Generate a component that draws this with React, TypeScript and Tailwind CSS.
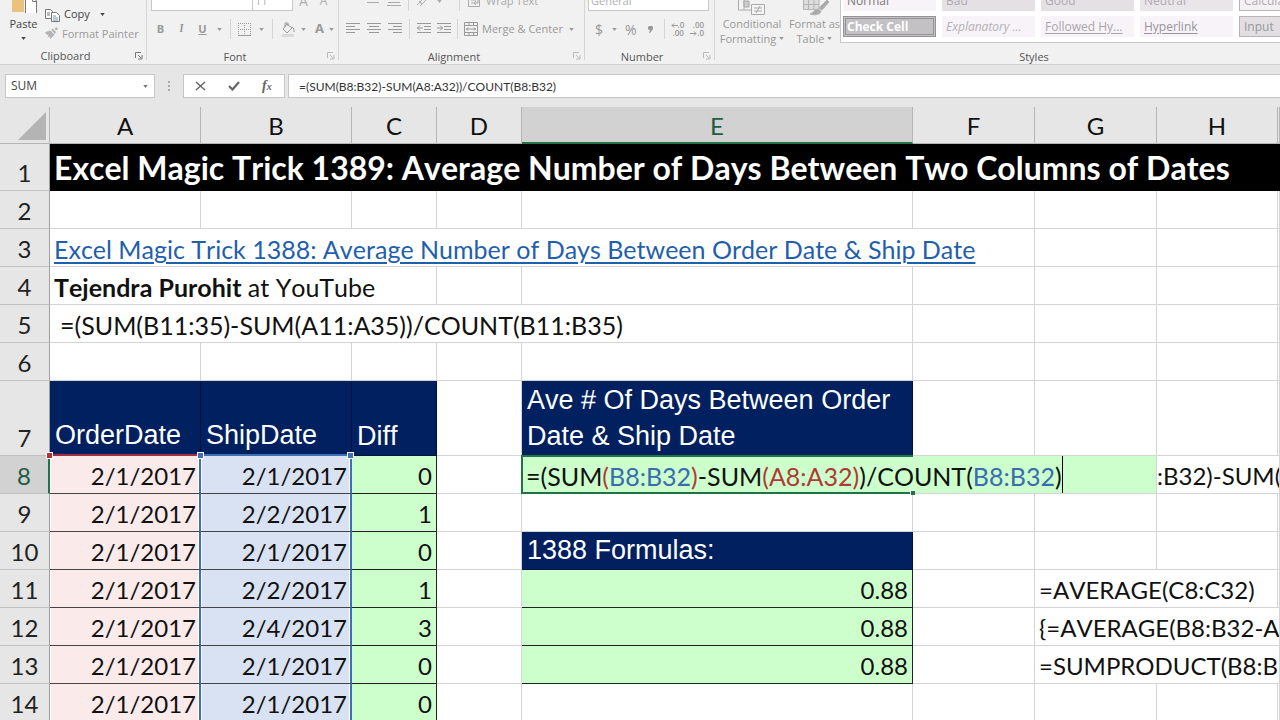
import { ReactNode, useState } from 'react';
import clsx from 'clsx';

const cell = 'h-[38px] border-r border-b border-[#d4d4d4] px-1 pb-[2px] align-bottom whitespace-nowrap';
const textCell = 'h-[38px] border-r border-b border-[#d4d4d4] px-1 pb-[2px] align-bottom text-[25px] whitespace-nowrap';
const navy = 'h-[38px] border-r border-b border-[#00103f] bg-[#00205f] px-[5px] pb-px text-left align-bottom font-["Liberation_Sans",sans-serif] text-[27px] leading-9 font-normal text-white';
const green = 'h-[38px] border-r border-b border-[#222] bg-[#ccffcc] px-1 pb-[2px] text-right align-bottom';

const columns = ['A', 'B', 'C', 'D', 'E', 'F', 'G', 'H', ''];

const orders = [
    { order: '2/1/2017', ship: '2/1/2017', diff: 0 },
    { order: '2/1/2017', ship: '2/2/2017', diff: 1 },
    { order: '2/1/2017', ship: '2/1/2017', diff: 0 },
    { order: '2/1/2017', ship: '2/2/2017', diff: 1 },
    { order: '2/1/2017', ship: '2/4/2017', diff: 3 },
    { order: '2/1/2017', ship: '2/1/2017', diff: 0 },
    { order: '2/1/2017', ship: '2/1/2017', diff: 0 },
];

const Caret = ({ className }: { className?: string }) => (
    <svg viewBox="0 0 6 4" className={clsx('h-[3px] shrink-0', className ?? 'w-[5px]')} fill="currentColor">
        <path d="M0 0h6L3 4z" />
    </svg>
);

const Launcher = ({ dark }: { dark?: boolean }) => (
    <button aria-label="More options" className={clsx('absolute right-1 bottom-1', dark ? 'text-[#777]' : 'text-[#b9b9b9]')}>
        <svg viewBox="0 0 8 8" className="size-2" fill="none" stroke="currentColor">
            <path d="M.5 6V.5H6M3 3l3 3M7 3v4H3" />
        </svg>
    </button>
);

const Divider = () => <div className="h-5 w-px bg-[#d5d5d5]" />;

const Group = ({ label, width, children, dark }: { label: string; width: string; children: ReactNode; dark?: boolean }) => (
    <section aria-label={label} className={clsx('relative flex h-16 flex-col justify-end overflow-hidden', width)}>
        {children}
        <div className="h-4 pr-4 text-center leading-[15px] text-[#555]">{label}</div>
        <Launcher dark={dark} />
        <div className="absolute right-0 bottom-1 h-16 w-px bg-[#d5d5d5]" />
    </section>
);

const AlignIcon = ({ d }: { d: string }) => (
    <svg viewBox="0 0 14 12" className="h-3 w-[14px]" fill="none" stroke="currentColor">
        <path d={d} />
    </svg>
);

const Clipboard = () => (
    <Group label="Clipboard" width="w-[147px]" dark>
        <div className="flex h-[48px] pl-[10px]">
            <button className="flex w-[27px] flex-col items-center justify-start text-[#444]">
                <svg viewBox="0 0 27 16" className="-mt-[3px] h-4 w-[27px] shrink-0">
                    <path d="M2 0h12v15H2z" fill="#eac27d" />
                    <path d="M15.500 1h8l3 3v12.500h-11z" fill="#fff" stroke="#777" />
                    <path d="M22.500 0v4.500h4" fill="none" stroke="#777" />
                </svg>
                <span className="leading-[22px]">Paste</span>
                <Caret className="mt-[2px] w-[5px]" />
            </button>
            <div className="flex flex-col items-start pl-2">
                <button className="flex h-[26px] items-end gap-1 pb-1 leading-4 text-[#444]">
                    <svg viewBox="0 0 15 13" className="h-[13px] w-[15px]" fill="#fff" stroke="#777">
                        <path d="M.5.500h5l2 2v7h-7zM2 4h3M2 6h3" />
                        <path d="M6.500 3.500h5l3 3v6h-8z" />
                        <path d="M8 7h3M8 9h5M8 11h5" stroke="#6e95c0" />
                    </svg>
                    Copy
                    <Caret className="mb-[6px] ml-[6px] w-[5px]" />
                </button>
                <button className="flex h-[22px] items-start gap-1 leading-4 text-[#9a9a9a]">
                    <svg viewBox="0 0 15 14" className="h-[14px] w-[13px]" fill="#b4b4b4">
                        <path d="M0 6l6-2 5 5-5 5-1-3-2 1 1-3-2 0zM7 3l2-1 4 4-2 2zM11 2l2-2 2 2-2 2z" />
                    </svg>
                    Format Painter
                </button>
            </div>
        </div>
    </Group>
);

const FontGroup = () => (
    <Group label="Font" width="w-[192px]">
        <div className="flex h-5 shrink-0 items-stretch pl-[4px] text-[#b0b0b0]">
            <select aria-label="Font name" className="w-[102px] appearance-none border border-[#c8c8c8] bg-white">
                <option></option>
            </select>
            <select aria-label="Font size" className="w-[40px] appearance-none border border-l-0 border-[#c8c8c8] bg-white px-[2px] leading-3">
                <option>11</option>
            </select>
            <button aria-label="Increase font size" className="ml-[6px] text-[14px] leading-5">A</button>
            <button aria-label="Decrease font size" className="ml-3 text-[12px] leading-5">A</button>
        </div>
        <div className="mt-2 mb-[10px] flex h-5 items-center pl-[9px] text-[11px] text-[#999]">
            <button className="w-[9px] font-bold">B</button>
            <button className="ml-3 w-[9px] font-serif font-bold italic">I</button>
            <button className="ml-3 w-[9px] font-bold underline">U</button>
            <Caret className="mr-2 ml-[10px] w-[5px]" />
            <Divider />
            <button aria-label="Borders" className="ml-[7px]">
                <svg viewBox="0 0 13 13" className="size-[13px]" fill="none" stroke="currentColor">
                    <path d="M.5 0v12M6.500 0v12M12.500 0v12M0 .5h13M0 6.500h13" strokeDasharray="1 1" />
                    <path d="M0 12.500h13" />
                </svg>
            </button>
            <Caret className="mr-2 ml-2 w-[5px]" />
            <Divider />
            <button aria-label="Fill color" className="ml-2">
                <svg viewBox="0 0 15 15" className="size-[15px]" fill="none" stroke="currentColor">
                    <path d="M6 2l5 4-5 5-4-4zM4 5V1h3v3M11 5c2 1 2 3 2 5" />
                    <path d="M1 12h12v3H1z" fill="#d9d9d9" stroke="none" />
                </svg>
            </button>
            <Caret className="ml-[5px] w-[5px]" />
            <button aria-label="Font color" className="ml-[9px] text-[13px] font-bold">A</button>
            <Caret className="ml-[5px] w-[5px]" />
        </div>
    </Group>
);

const Alignment = () => (
    <Group label="Alignment" width="w-[246px]">
        <div className="flex h-5 shrink-0 items-center text-[#aaa]">
            <button aria-label="Middle align" className="ml-[27px]">
                <AlignIcon d="M1 7.500h12" />
            </button>
            <button aria-label="Bottom align" className="ml-[7px]">
                <AlignIcon d="M0 4.500h14M1 7.500h12M0 10.500h14" />
            </button>
            <div className="ml-[7px] h-5 w-px bg-[#d5d5d5]" />
            <button aria-label="Orientation" className="ml-[7px]">
                <AlignIcon d="M1 10l8-8M4 11l8-8M3 6l3 3" />
            </button>
            <Caret className="ml-[7px] w-[5px]" />
            <div className="ml-[17px] h-5 w-px bg-[#d5d5d5]" />
            <button className="ml-2 flex items-center gap-[6px] leading-5">
                <svg viewBox="0 0 12 12" className="size-3" fill="none" stroke="currentColor">
                    <path d="M.5 0v11.500h11V0M3 2h6M3 5h5M3 8h3M10 5v3H7M8 6L6 8l2 2" />
                </svg>
                Wrap Text
            </button>
        </div>
        <div className="mt-2 mb-[10px] flex h-5 items-center pl-[7px] text-[#999]">
            <button aria-label="Align left">
                <AlignIcon d="M0 .5h14M0 3.500h9M0 6.500h14M0 9.500h9" />
            </button>
            <button aria-label="Center" className="ml-[7px]">
                <AlignIcon d="M0 .5h14M2 3.500h10M0 6.500h14M2 9.500h10" />
            </button>
            <button aria-label="Align right" className="ml-[7px]">
                <AlignIcon d="M0 .5h14M5 3.500h9M0 6.500h14M5 9.500h9" />
            </button>
            <div className="mr-[7px] ml-[7px]">
                <Divider />
            </div>
            <button aria-label="Decrease indent">
                <AlignIcon d="M0 .5h14M7 3.500h7M7 6.500h7M0 9.500h14M0 5h6M3 2.500L.5 5 3 7.500" />
            </button>
            <button aria-label="Increase indent" className="ml-[6px]">
                <AlignIcon d="M0 .5h14M7 3.500h7M7 6.500h7M0 9.500h14M0 5h6M3 2.500L5.500 5 3 7.500" />
            </button>
            <div className="mr-[6px] ml-[6px]">
                <Divider />
            </div>
            <button className="flex items-center gap-1">
                <svg viewBox="0 0 14 14" className="size-[14px]" fill="none" stroke="currentColor">
                    <path d="M.5.500h13v13H.5zM0 3.500h14M0 10.500h14M5 .5v3M5 10v3M9.500 .5v3M9.500 10v3M2 7h10M4 5.500L2.500 7 4 8.500M10 5.500L11.500 7 10 8.500" />
                </svg>
                Merge & Center
            </button>
            <Caret className="ml-[6px] w-[5px]" />
        </div>
    </Group>
);

const NumberGroup = () => (
    <Group label="Number" width="w-[130px]">
        <div className="flex h-5 shrink-0 pl-[3px]">
            <select aria-label="Number format" className="w-[121px] appearance-none border border-[#c8c8c8] bg-white px-[2px] leading-4 text-[#b0b0b0]">
                <option>General</option>
            </select>
        </div>
        <div className="mt-2 mb-[10px] flex h-5 items-center pl-[10px] text-[14px] text-[#999]">
            <button>$</button>
            <Caret className="ml-[9px] w-[5px]" />
            <button className="ml-2">%</button>
            <button aria-label="Comma style" className="ml-[11px]">
                <svg viewBox="0 0 5 7" className="h-[7px] w-[5px]" fill="currentColor">
                    <path d="M1 0h3l1 1v2L2 7H1l1-3H1L0 3V1z" />
                </svg>
            </button>
            <div className="mr-[6px] ml-[11px]">
                <Divider />
            </div>
            <button aria-label="Increase decimal" className="flex flex-col text-left text-[8px] leading-[8px] font-semibold">
                <span className="flex items-center">
                    <svg viewBox="0 0 7 5" className="h-[5px] w-[7px]" fill="none" stroke="currentColor">
                        <path d="M7 2.500H1M3 .5l-2 2 2 2" />
                    </svg>
                    .0
                </span>
                <span className="pl-[2px]">.00</span>
            </button>
            <button aria-label="Decrease decimal" className="ml-[6px] flex flex-col items-end text-[8px] leading-[8px] font-semibold">
                <span>.00</span>
                <span className="flex items-center">
                    <svg viewBox="0 0 7 5" className="h-[5px] w-[7px]" fill="none" stroke="currentColor">
                        <path d="M0 2.500h6M4 .5l2 2-2 2" />
                    </svg>
                    .0
                </span>
            </button>
        </div>
    </Group>
);

const styleCell = 'flex h-[21px] items-center overflow-hidden px-1 text-left text-[12px] leading-4 whitespace-nowrap';

const Styles = () => (
    <section aria-label="Styles" className="flex h-16 min-w-0 flex-1 overflow-hidden text-[#999]">
        <button className="flex w-[74px] flex-col items-center justify-end pb-[18px] leading-[15px]">
            <svg viewBox="0 0 30 16" className="h-4 w-[30px] shrink-0" fill="#f4f4f4" stroke="#aaa">
                <path d="M1.500 0v10H15M7 0v10" />
                <path d="M7 1h5v6H7z" fill="#ccc" />
                <path d="M14.500 4.500h13v10h-13zM17 8h8M17 11h8M23 6l-4 7" />
            </svg>
            <span>Conditional</span>
            <span className="flex items-center gap-[3px]">
                Formatting
                <Caret />
            </span>
        </button>
        <button className="flex w-[51px] flex-col items-center justify-end pb-[18px] leading-[15px] whitespace-nowrap">
            <svg viewBox="0 0 30 16" className="h-4 w-[30px] shrink-0" fill="#ddd" stroke="#b4b4b4">
                <path d="M3.500 0v9.500H19V0" />
                <path d="M3 4.500h16M8.500 0v9M14 0v9" />
                <path d="M27 0l2 2-7 8-3-2zM18 9c-4 0-4 4-8 5 5 2 11 0 11-3z" fill="#aaa" />
            </svg>
            <span>Format as</span>
            <span className="flex items-center gap-[3px]">
                Table
                <Caret />
            </span>
        </button>
        <div className="flex min-w-0 flex-1 flex-col justify-end">
            <div className="grid shrink-0 grid-cols-[93px_93px_93px_93px_93px] gap-x-[6px] gap-y-[5px] border-b border-l border-[#c6c6c6] bg-white pb-[5px] pl-[2px]">
                <button className={clsx(styleCell, 'bg-[#f7f3f8] text-[#777]')}>Normal</button>
                <button className={clsx(styleCell, 'bg-[#e5e0e4] text-[#b0abb0]')}>Bad</button>
                <button className={clsx(styleCell, 'bg-[#e5e0e4] text-[#b0abb0]')}>Good</button>
                <button className={clsx(styleCell, 'bg-[#e9e5e9] text-[#b0abb0]')}>Neutral</button>
                <button className={clsx(styleCell, 'border border-[#b5b5b5] bg-[#f4f1f4] text-[#b0abb0]')}>Calculation</button>
                <button className={clsx(styleCell, 'border-[3px] border-double border-[#949494] bg-[#c3c1c3] px-[1px] font-bold text-white')}>Check Cell</button>
                <button className={clsx(styleCell, 'bg-[#f7f3f8] text-[#b5b0b5] italic')}>Explanatory ...</button>
                <button className={clsx(styleCell, 'bg-[#f7f3f8] text-[#aaa5aa] underline underline-offset-2')}>Followed Hy...</button>
                <button className={clsx(styleCell, 'bg-[#f7f3f8] text-[#999499] underline underline-offset-2')}>Hyperlink</button>
                <button className={clsx(styleCell, 'border border-[#b5b5b5] bg-[#e2dee2] text-[#999]')}>Input</button>
            </div>
            <div className="mt-[6px] h-4 pr-[52px] text-center leading-[15px] text-[#555]">Styles</div>
        </div>
    </section>
);

const FormulaBar = () => {
    const [name, setName] = useState('SUM');
    const [formula, setFormula] = useState('=(SUM(B8:B32)-SUM(A8:A32))/COUNT(B8:B32)');

    return (
        <div className="flex h-[42px] items-start bg-[#e6e6e6] pt-[9px] pl-[5px]">
            <div className="flex h-6 w-[150px] items-center border border-[#c6c6c6] bg-white pr-[5px] text-[#777]">
                <input aria-label="Name box" value={name} onChange={e => setName(e.target.value)} className="min-w-0 flex-1 pl-[5px] text-[12px] text-[#444] outline-none" />
                <button aria-label="Show names">
                    <Caret className="w-[7px]" />
                </button>
            </div>
            <svg viewBox="0 0 2 10" className="mt-[7px] ml-[13px] h-[10px] w-[2px]" fill="#aaa">
                <path d="M0 0h2v2H0zM0 4h2v2H0zM0 8h2v2H0z" />
            </svg>
            <div className="ml-[13px] flex h-6 w-[102px] items-center border border-[#c6c6c6] bg-white pl-[11px] text-[#666]">
                <button aria-label="Cancel">
                    <svg viewBox="0 0 11 10" className="h-[10px] w-[11px]" fill="none" stroke="currentColor" strokeWidth="1.5">
                        <path d="M1 1l9 8M10 1L1 9" />
                    </svg>
                </button>
                <button aria-label="Enter" className="ml-[22px]">
                    <svg viewBox="0 0 12 10" className="h-[10px] w-3" fill="none" stroke="currentColor" strokeWidth="2.200">
                        <path d="M1 5l3.500 3.500L11 1" />
                    </svg>
                </button>
                <button aria-label="Insert function" className="ml-[22px] font-['Liberation_Serif',serif] text-[14px] leading-4 font-bold italic">
                    f<span className="text-[10px]">x</span>
                </button>
            </div>
            <input
                aria-label="Formula"
                value={formula}
                onChange={e => setFormula(e.target.value)}
                className="ml-[3px] h-6 min-w-0 flex-1 border border-r-0 border-[#c6c6c6] bg-white pl-[10px] font-[Lato,sans-serif] text-[12px] text-[#333] outline-none [font-kerning:none]"
            />
        </div>
    );
};

const RowNumber = ({ n, active }: { n: number; active?: boolean }) => (
    <th
        scope="row"
        className={clsx(
            'border-b pb-[2px] text-center align-bottom font-normal',
            active ? 'border-r-2 border-r-[#217346] border-b-[#c0c0c0] bg-[#d2d2d2] text-[#215c41]' : 'border-r border-r-[#9f9f9f] border-b-[#c0c0c0] bg-[#e6e6e6] text-[#222]',
        )}>
        {n}
    </th>
);

const Blank = ({ count }: { count: number }) => (
    <>
        {Array.from({ length: count }, (_, i) => (
            <td key={i} className={cell} />
        ))}
    </>
);

const Handle = ({ className }: { className: string }) => <span className={clsx('absolute z-10 size-[7px] border border-white', className)} />;

const OrderCells = ({ index }: { index: number }) => {
    const row = orders[index];
    const first = index === 0;
    return (
        <>
            <td className="relative h-[38px] border-r-2 border-b border-r-[#3f6fb5] border-b-[#444] bg-[#faeaea] pr-[3px] pb-[2px] text-right align-bottom shadow-[inset_1px_0_0_#fff,inset_-1px_0_0_#fff]">
                {row.order}
                {first && <Handle className="-top-[4px] -left-[4px] bg-[#b03040]" />}
            </td>
            <td className="relative h-[38px] border-r-2 border-b border-r-[#3f6fb5] border-b-[#444] bg-[#d8e2f3] pr-[3px] pb-[2px] text-right align-bottom shadow-[inset_1px_0_0_#fff,inset_-1px_0_0_#fff]">
                {row.ship}
                {first && <Handle className="-top-[4px] -left-[4px] bg-[#3f6fb5]" />}
                {first && <Handle className="-top-[4px] -right-[4px] bg-[#3f6fb5]" />}
            </td>
            <td className={green}>{row.diff}</td>
        </>
    );
};

const CellEditor = () => (
    <div role="textbox" aria-label="Cell E8" className="absolute top-0 left-0 flex h-[37px] w-[634px] items-end bg-[#ccffcc] pb-[2px] pl-1 text-left text-[25px]">
        <span>=(SUM</span>
        <span className="text-[#b03a36]">(</span>
        <span className="text-[#3a6cb0]">B8:B32</span>
        <span className="text-[#b03a36]">)</span>
        <span>-SUM</span>
        <span className="text-[#b03a36]">(A8:A32)</span>
        <span>)/COUNT(</span>
        <span className="text-[#3a6cb0]">B8:B32</span>
        <span>)</span>
        <span className="-mb-[2px] h-[37px] w-px bg-black" />
        <span className="absolute -top-px -left-px h-[39px] w-[392px] border-2 border-r-0 border-[#217346]" />
        <span className="absolute -bottom-[2px] left-[388px] h-[5px] w-[5px] border-t border-l border-white bg-[#217346]" />
    </div>
);

const Sheet = () => (
    <table className="w-full min-w-[1280px] table-fixed border-separate border-spacing-0 bg-white font-[Lato,sans-serif] text-[24px] leading-[30px] text-[#111] [font-kerning:none]">
        <colgroup>
            <col className="w-[50px]" />
            <col className="w-[151px]" />
            <col className="w-[151px]" />
            <col className="w-[85px]" />
            <col className="w-[85px]" />
            <col className="w-[391px]" />
            <col className="w-[122px]" />
            <col className="w-[122px]" />
            <col className="w-[121px]" />
            <col />
        </colgroup>
        <thead>
            <tr>
                <th className="h-[37px] border-r border-b border-[#b5b5b5] bg-[#e6e6e6] p-0 align-bottom">
                    <svg viewBox="0 0 28 28" className="mb-[3px] ml-[18px] size-7" fill="#b4b4b4">
                        <path d="M28 0v28H0z" />
                    </svg>
                </th>
                {columns.map((c, i) => (
                    <th
                        key={i}
                        scope="col"
                        className={clsx(
                            'h-[37px] border-r p-0 align-bottom font-normal',
                            c === 'E' ? 'border-b-2 border-r-[#b5b5b5] border-b-[#217346] bg-[#d2d2d2] pb-px text-[#215c41]' : 'border-b border-[#b5b5b5] bg-[#e6e6e6] pb-[2px]',
                        )}>
                        {c}
                    </th>
                ))}
            </tr>
        </thead>
        <tbody>
            <tr>
                <RowNumber n={1} />
                <td colSpan={9} className="h-[47px] overflow-hidden bg-black px-1 pb-1 align-bottom text-[32px] leading-[38px] font-bold whitespace-nowrap text-white">
                    Excel Magic Trick 1389: Average Number of Days Between Two Columns of Dates
                </td>
            </tr>
            <tr>
                <RowNumber n={2} />
                <Blank count={9} />
            </tr>
            <tr>
                <RowNumber n={3} />
                <td colSpan={6} className={textCell}>
                    <a href="#" className="text-[#1f5fad] underline decoration-2 underline-offset-[3px]">
                        Excel Magic Trick 1388: Average Number of Days Between Order Date & Ship Date
                    </a>
                </td>
                <Blank count={3} />
            </tr>
            <tr>
                <RowNumber n={4} />
                <td colSpan={3} className={textCell}>
                    <b>Tejendra Purohit</b> at YouTube
                </td>
                <Blank count={6} />
            </tr>
            <tr>
                <RowNumber n={5} />
                <td colSpan={5} className={clsx(textCell, 'pl-[10px]')}>
                    =(SUM(B11:35)-SUM(A11:A35))/COUNT(B11:B35)
                </td>
                <Blank count={4} />
            </tr>
            <tr>
                <RowNumber n={6} />
                <Blank count={9} />
            </tr>
            <tr>
                <RowNumber n={7} />
                <td className={clsx(navy, 'h-[75px] border-b-2 border-b-[#a03048]')}>OrderDate</td>
                <td className={clsx(navy, 'border-b-2 border-b-[#3f6fb5]')}>ShipDate</td>
                <td className={navy}>Diff</td>
                <Blank count={1} />
                <td className={navy}>Ave # Of Days Between Order Date & Ship Date</td>
                <Blank count={4} />
            </tr>
            <tr>
                <RowNumber n={8} active />
                <OrderCells index={0} />
                <Blank count={1} />
                <td className={clsx(green, 'relative whitespace-nowrap')}>
                    <CellEditor />
                </td>
                <Blank count={2} />
                <td colSpan={2} className={clsx(cell, 'overflow-hidden pl-0')}>
                    :B32)-SUM(A8:A32))/COUNT(B8:B32)
                </td>
            </tr>
            <tr>
                <RowNumber n={9} />
                <OrderCells index={1} />
                <Blank count={6} />
            </tr>
            <tr>
                <RowNumber n={10} />
                <OrderCells index={2} />
                <Blank count={1} />
                <td className={navy}>1388 Formulas:</td>
                <Blank count={4} />
            </tr>
            <tr>
                <RowNumber n={11} />
                <OrderCells index={3} />
                <Blank count={1} />
                <td className={green}>0.88</td>
                <Blank count={1} />
                <td colSpan={2} className={cell}>
                    =AVERAGE(C8:C32)
                </td>
                <Blank count={1} />
            </tr>
            <tr>
                <RowNumber n={12} />
                <OrderCells index={4} />
                <Blank count={1} />
                <td className={green}>0.88</td>
                <Blank count={1} />
                <td colSpan={3} className={clsx(cell, 'overflow-hidden')}>
                    {'{=AVERAGE(B8:B32-A8:A32)}'}
                </td>
            </tr>
            <tr>
                <RowNumber n={13} />
                <OrderCells index={5} />
                <Blank count={1} />
                <td className={green}>0.88</td>
                <Blank count={1} />
                <td colSpan={3} className={clsx(cell, 'overflow-hidden')}>
                    =SUMPRODUCT(B8:B32-A8:A32)
                </td>
            </tr>
            <tr>
                <RowNumber n={14} />
                <OrderCells index={6} />
                <Blank count={6} />
            </tr>
        </tbody>
    </table>
);

const App = () => (
    <div className="h-screen overflow-hidden bg-white font-['Open_Sans',sans-serif] text-[11px]">
        <header className="flex border-b border-[#d0d0d0] bg-[#f1f1f1]">
            <Clipboard />
            <FontGroup />
            <Alignment />
            <NumberGroup />
            <Styles />
        </header>
        <FormulaBar />
        <Sheet />
    </div>
);

export default App;
